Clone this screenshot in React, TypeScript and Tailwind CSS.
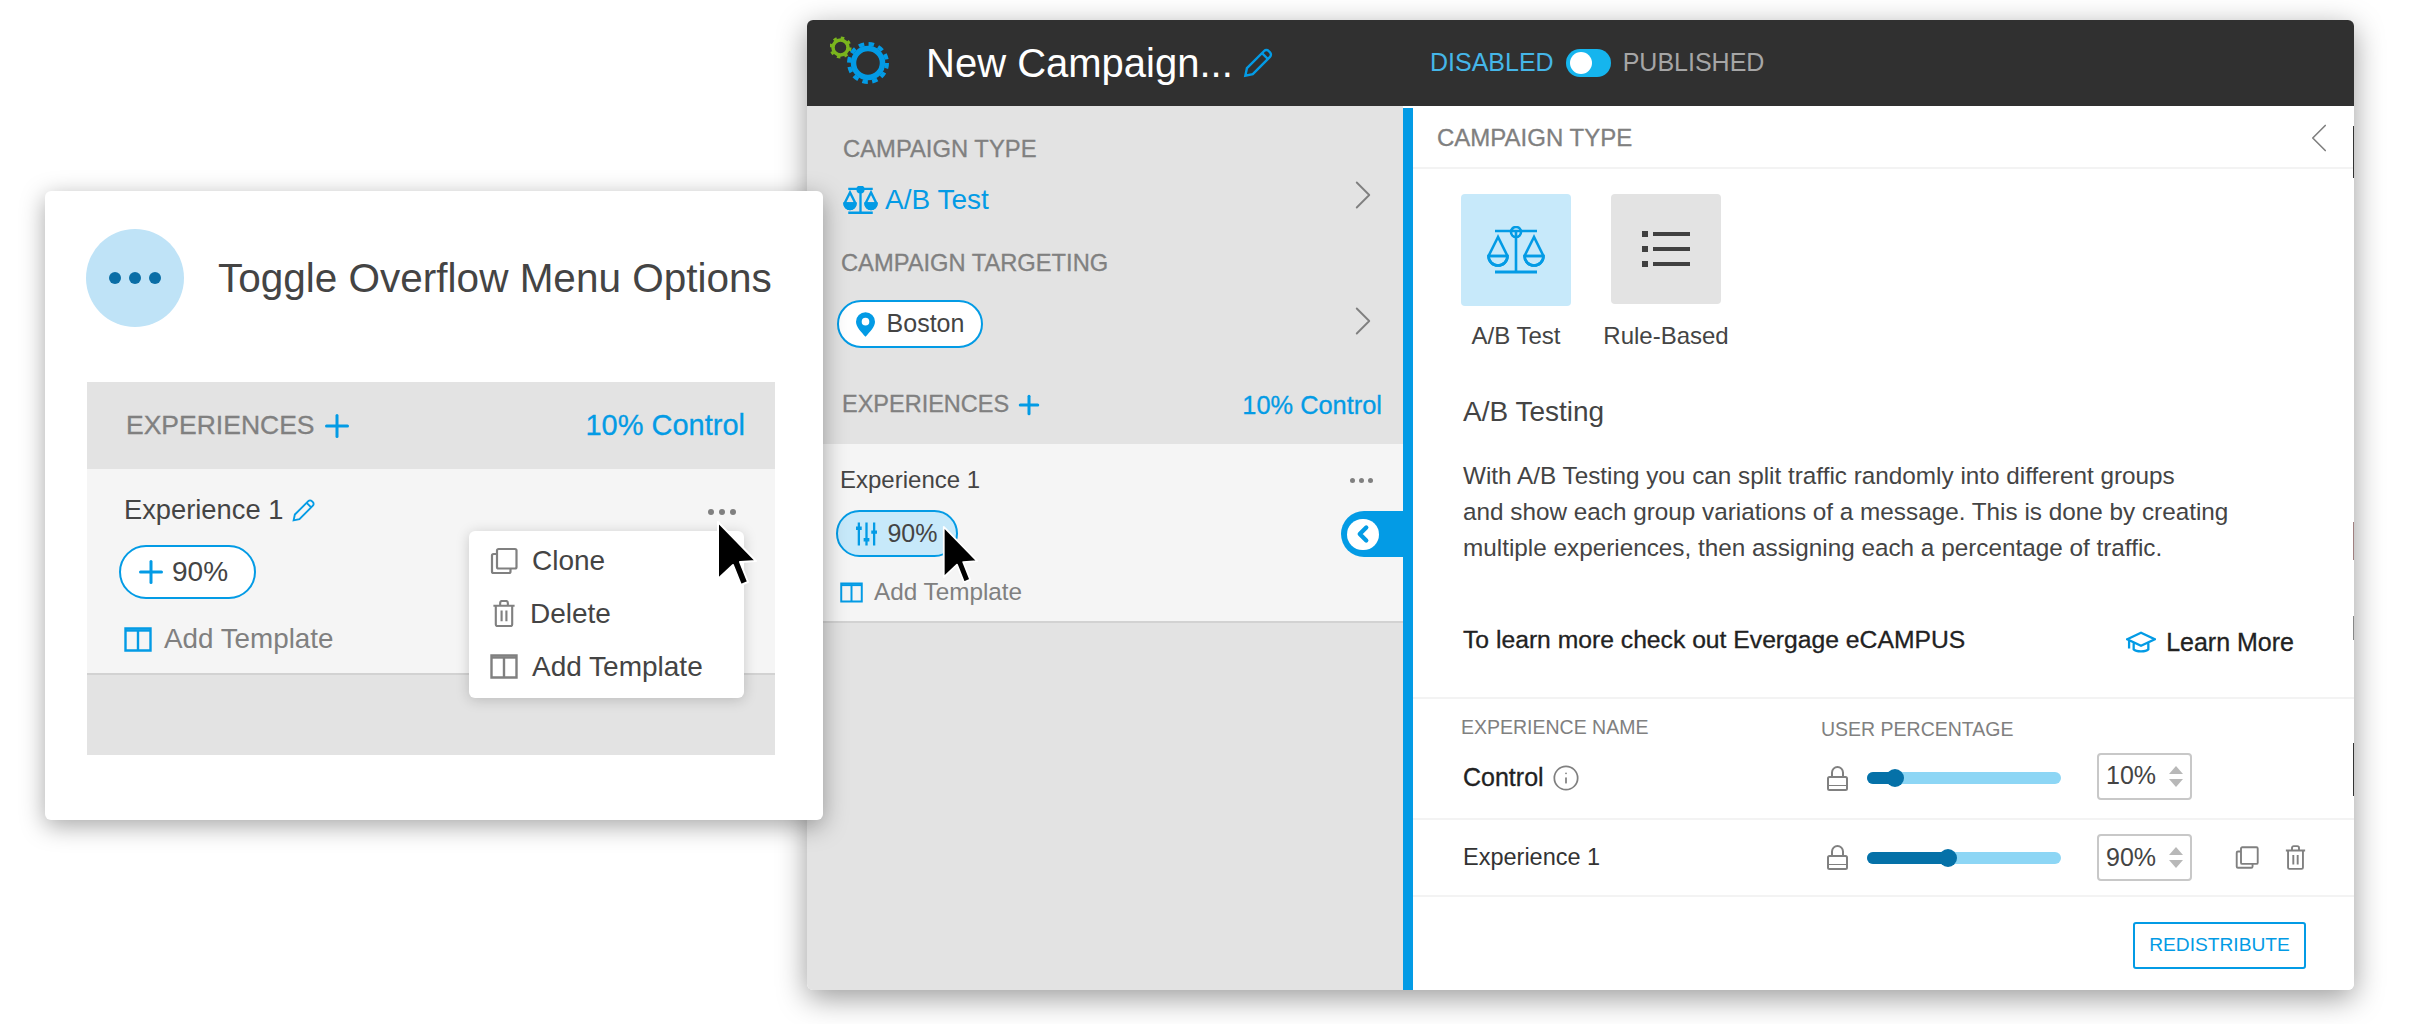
import { ChevronLeft, ChevronRight, Info, Plus } from "lucide-react";

const font = "font-['Liberation_Sans',Arial,sans-serif]";
const heavy = "[-webkit-text-stroke:0.3px_currentColor]";

function Pencil({ className }: { className?: string }) {
  return (
    <svg viewBox="0 0 24 24" fill="none" stroke="currentColor" strokeWidth="1.8" className={className}>
      <path d="M2.500 21.500l1.200-5.600L16.600 3a2.400 2.400 0 0 1 3.400 0l1 1a2.400 2.400 0 0 1 0 3.400L8.100 20.300z" />
      <path d="M15 4.600l4.400 4.400" />
    </svg>
  );
}

function Scales({ className, bold }: { className?: string; bold?: boolean }) {
  const pan = bold ? "currentColor" : "none";
  return (
    <svg viewBox="0 0 60 48" fill="none" stroke="currentColor" strokeWidth={bold ? 4 : 2.600} className={className}>
      <path d="M9 5h42M30 5v40" />
      <path d="M9 46h42" strokeWidth={bold ? 5 : 3} />
      <circle cx="30" cy="6" r="5" fill={pan} />
      <path d="M12 11L2.500 30a9.500 9.500 0 0 0 19 0zM2.500 30h19" />
      <path d="M2.500 30a9.500 9.500 0 0 0 19 0z" fill={pan} />
      <path d="M48 11l-9.500 19a9.500 9.500 0 0 0 19 0zM38.500 30h19" />
      <path d="M38.500 30a9.500 9.500 0 0 0 19 0z" fill={pan} />
    </svg>
  );
}

function Columns({ className }: { className?: string }) {
  return (
    <svg viewBox="0 0 28 25" fill="none" stroke="currentColor" strokeWidth="2.400" className={className}>
      <path d="M1.500 1.500h25v22h-25zM14 3v20" />
      <path d="M1.500 3.500h25" />
    </svg>
  );
}

function Copy({ className }: { className?: string }) {
  return (
    <svg viewBox="0 0 28 28" fill="none" stroke="currentColor" strokeWidth="2.200" className={className}>
      <rect x="7" y="2" width="19.500" height="19.500" rx="1.500" />
      <path d="M7 7H3.500A1.500 1.500 0 0 0 2 8.500V24.500A1.500 1.500 0 0 0 3.500 26H19a1.500 1.500 0 0 0 1.500-1.500V21.500" />
    </svg>
  );
}

function Trash({ className }: { className?: string }) {
  return (
    <svg viewBox="0 0 24 28" fill="none" stroke="currentColor" strokeWidth="2.200" className={className}>
      <path d="M1 6h22M3.500 6v19.500a1.500 1.500 0 0 0 1.500 1.500h14a1.500 1.500 0 0 0 1.500-1.500V6" />
      <path d="M8 6V3a2 2 0 0 1 2-2h4a2 2 0 0 1 2 2v3M9.500 11v11M14.500 11v11" />
    </svg>
  );
}

function Padlock({ className }: { className?: string }) {
  return (
    <svg viewBox="0 0 21 25" fill="none" stroke="currentColor" strokeWidth="2" className={className}>
      <rect x="1" y="11" width="19" height="13" rx="1.500" />
      <path d="M1 19.500h19" strokeWidth="1" />
      <path d="M5 11V6.500a5.500 5.500 0 0 1 11 0V11" />
    </svg>
  );
}

function Sliders({ className }: { className?: string }) {
  return (
    <svg viewBox="0 0 22 24" fill="none" stroke="currentColor" strokeWidth="2.400" className={className}>
      <path d="M3 0v24M11 0v24M19 0v24" />
      <path d="M0 6h6M8 18h6M16 10h6" strokeWidth="3.500" />
    </svg>
  );
}

function Cursor({ className }: { className?: string }) {
  return (
    <svg viewBox="0 0 42 68" className={className}>
      <path d="M2 2v57l15-14 8 20 7-3-8-20 16-1z" fill="#000" stroke="#fff" strokeWidth="2" strokeLinejoin="round" />
    </svg>
  );
}

function Gears() {
  return (
    <svg viewBox="0 0 60 48" className="h-[48px] w-[60px] -translate-y-[3px]" fill="none">
      <circle cx="10.500" cy="11.500" r="7.500" stroke="#7ab51d" strokeWidth="3.500" />
      <circle cx="10.500" cy="11.500" r="9.800" stroke="#7ab51d" strokeWidth="2.500" strokeDasharray="3.500 4.200" />
      <circle cx="38" cy="27" r="14.500" stroke="#039be5" strokeWidth="5.500" />
      <circle cx="38" cy="27" r="19" stroke="#039be5" strokeWidth="4" strokeDasharray="5.500 4.450" />
    </svg>
  );
}

function MenuRow({ icon, label, labelClass }: { icon: React.ReactNode; label: string; labelClass?: string }) {
  return (
    <div className="flex h-[53px] items-center gap-[14px] pl-[21px] text-[28px] text-[#444]">
      <span className="flex w-[28px] justify-center text-[#808080]">{icon}</span>
      <span className={labelClass}>{label}</span>
    </div>
  );
}

function OverflowCard() {
  return (
    <section className="absolute left-[45px] top-[191px] h-[629px] w-[778px] rounded-[6px] bg-white pl-[42px] pr-[48px] shadow-[0_6px_24px_rgba(0,0,0,0.35)]">
      <div className="flex h-[191px] items-center gap-[33px] pb-[17px]">
        <div className="flex h-[98px] w-[98px] -translate-x-[1px] items-center justify-center gap-[8px] rounded-full bg-[#bfe3f7]">
          <span className="h-[12px] w-[12px] rounded-full bg-[#0a6ea6]" />
          <span className="h-[12px] w-[12px] rounded-full bg-[#0a6ea6]" />
          <span className="h-[12px] w-[12px] rounded-full bg-[#0a6ea6]" />
        </div>
        <h1 className="whitespace-nowrap text-[40.500px] font-normal text-[#444]">Toggle Overflow Menu Options</h1>
      </div>

      <div className="h-[373px] bg-[#e3e3e3]">
        <div className="flex h-[87px] items-center justify-between pl-[39px] pr-[30px]">
          <div className={`flex items-center gap-[4px] text-[26.500px] text-[#808080] ${heavy}`}>
            EXPERIENCES
            <Plus className="h-[36px] w-[36px] text-[#039be5]" strokeWidth={2} />
          </div>
          <span className={`text-[29px] text-[#039be5] ${heavy}`}>10% Control</span>
        </div>
        <div className="relative h-[206px] border-b-2 border-[#d2d2d2] bg-[#f5f5f5] pl-[37px]">
          <div className="flex h-[72px] items-center gap-[8px] pt-[10px] text-[27.300px] text-[#444]">
            Experience 1
            <Pencil className="h-[25px] w-[25px] text-[#039be5]" />
          </div>
          <div className="mt-[4px] flex h-[54px] w-[137px] -translate-x-[5px] items-center gap-[3px] rounded-full border-2 border-[#039be5] bg-white pl-[12px] text-[28px] text-[#444]">
            <Plus className="h-[36px] w-[36px] text-[#039be5]" strokeWidth={2} />
            90%
          </div>
          <div className="mt-[24px] flex items-center gap-[12px] text-[27.800px] leading-[32px] text-[#808080]">
            <Columns className="h-[25px] w-[28px] text-[#039be5]" />
            Add Template
          </div>
          <span className="absolute right-[39px] top-[40px] flex items-center gap-[5px]">
            <span className="h-[6px] w-[6px] rounded-full bg-[#808080]" />
            <span className="h-[6px] w-[6px] rounded-full bg-[#808080]" />
            <span className="h-[6px] w-[6px] rounded-full bg-[#808080]" />
          </span>
          <div className="absolute left-[382px] top-[62px] h-[167px] w-[275px] rounded-[6px] bg-white pt-[3px] shadow-[0_2px_14px_rgba(0,0,0,0.18)]">
            <MenuRow icon={<Copy className="h-[28px] w-[28px]" />} label="Clone" />
            <MenuRow icon={<Trash className="h-[27px] w-[24px]" />} label="Delete" labelClass="-translate-x-[2px]" />
            <MenuRow icon={<Columns className="h-[25px] w-[28px]" />} label="Add Template" />
          </div>
          <Cursor className="absolute left-[629px] top-[51px] h-[68px] w-[42px]" />
        </div>
      </div>
    </section>
  );
}

function Sidebar() {
  return (
    <aside className="relative w-[596px] bg-[#e3e3e3]">
      <div className="h-[280px] pl-[36px] pr-[15px] pt-[29px]">
        <p className={`text-[23.800px] leading-[28px] text-[#808080] ${heavy}`}>CAMPAIGN TYPE</p>
        <div className="mt-[12px] flex h-[50px] items-center justify-between">
          <span className="flex items-center gap-[7px] text-[28px] leading-[30px] text-[#039be5]">
            <Scales bold className="h-[28px] w-[35px]" />
            A/B Test
          </span>
          <ChevronRight className="h-[50px] w-[50px] -translate-y-[5px] text-[#808080]" strokeWidth={0.900} />
        </div>
        <p className={`mt-[24px] -translate-x-[2px] text-[23.700px] leading-[28px] text-[#808080] ${heavy}`}>CAMPAIGN TARGETING</p>
        <div className="mt-[22px] flex h-[50px] items-center justify-between">
          <span className="flex h-[48px] w-[146px] -translate-x-[6px] items-center justify-center gap-[12px] rounded-full border-2 border-[#039be5] bg-white text-[25px] text-[#444]">
            <svg viewBox="0 0 20 26" className="h-[25px] w-[19px]" fill="#039be5">
              <path d="M10 0a10 10 0 0 1 10 10c0 6-6 11-10 16C6 21 0 16 0 10A10 10 0 0 1 10 0zm0 6a4 4 0 1 0 0 8 4 4 0 0 0 0-8z" />
            </svg>
            Boston
          </span>
          <ChevronRight className="h-[50px] w-[50px] -translate-y-[3px] text-[#808080]" strokeWidth={0.900} />
        </div>
      </div>
      <div className="flex h-[38px] items-center justify-between pl-[35px] pr-[21px]">
        <span className={`flex items-center gap-[5px] text-[23.500px] text-[#808080] ${heavy}`}>
          EXPERIENCES
          <Plus className="h-[30px] w-[30px] text-[#039be5]" strokeWidth={2.400} />
        </span>
        <span className={`text-[25.400px] text-[#039be5] ${heavy}`}>10% Control</span>
      </div>
      <div className="relative mt-[20px] h-[179px] border-b-2 border-[#d2d2d2] bg-[#f5f5f5] pl-[33px]">
        <p className="pt-[22px] text-[24px] leading-[28px] text-[#444]">Experience 1</p>
        <span className="mt-[16px] flex h-[47px] w-[122px] -translate-x-[4px] items-center justify-center gap-[10px] rounded-full border-2 border-[#039be5] bg-[#c7e9fa] text-[25px] text-[#444]">
          <Sliders className="h-[24px] w-[21px] text-[#039be5]" />
          90%
        </span>
        <div className="mt-[21px] flex items-center gap-[11px] text-[24.300px] leading-[28px] text-[#808080]">
          <Columns className="h-[21px] w-[23px] text-[#039be5]" />
          Add Template
        </div>
        <span className="absolute right-[30px] top-[34px] flex items-center gap-[4px]">
          <span className="h-[5px] w-[5px] rounded-full bg-[#808080]" />
          <span className="h-[5px] w-[5px] rounded-full bg-[#808080]" />
          <span className="h-[5px] w-[5px] rounded-full bg-[#808080]" />
        </span>
        <Cursor className="absolute left-[135px] top-[81px] h-[60px] w-[37px]" />
        <div className="absolute right-0 top-[67px] flex h-[46px] w-[62px] items-center rounded-l-full bg-[#039be5] pl-[6px]">
          <span className="flex h-[31px] w-[32px] items-center justify-center rounded-full bg-white">
            <ChevronLeft className="h-[26px] w-[26px] text-[#039be5]" strokeWidth={4} />
          </span>
        </div>
      </div>
    </aside>
  );
}

function ExperienceRow({
  name,
  value,
  pct,
  inputShift,
  actions,
}: {
  name: React.ReactNode;
  value: string;
  pct: number;
  inputShift?: string;
  actions?: boolean;
}) {
  return (
    <div className="flex h-full items-center">
      <div className="w-[414px] pl-[50px] text-[#333]">{name}</div>
      <Padlock className="h-[25px] w-[21px] text-[#808080]" />
      <div className="relative ml-[19px] h-[12px] w-[194px] rounded-full bg-[#8dd6f5]">
        <div className="h-full rounded-full bg-[#0571a8]" style={{ width: `${pct}%` }} />
        <span
          className="absolute top-[-3px] h-[18px] w-[18px] -translate-x-1/2 rounded-full bg-[#0571a8]"
          style={{ left: `${pct}%` }}
        />
      </div>
      <div className={`ml-[36px] flex h-[47px] w-[95px] items-center justify-between rounded-[4px] border-2 border-[#c8c8c8] pl-[7px] pr-[7px] text-[25px] text-[#444] ${inputShift ?? ""}`}>
        {value}
        <span className="flex flex-col gap-[5px]">
          <span className="h-0 w-0 border-x-[7px] border-b-[8px] border-x-transparent border-b-[#b8b8b8]" />
          <span className="h-0 w-0 border-x-[7px] border-t-[8px] border-x-transparent border-t-[#b8b8b8]" />
        </span>
      </div>
      {actions ? (
        <div className="ml-[43px] flex items-center gap-[26px] text-[#808080]">
          <Copy className="h-[25px] w-[24px]" />
          <Trash className="h-[25px] w-[21px]" />
        </div>
      ) : null}
    </div>
  );
}

function Detail() {
  return (
    <div className="relative flex-1 bg-white">
      <div className="flex h-[63px] items-center justify-between border-b-2 border-[#f3f3f3] pl-[24px] pr-[10px] pt-[3px] text-[#808080]">
        <span className={`text-[24px] ${heavy}`}>CAMPAIGN TYPE</span>
        <ChevronLeft className="h-[50px] w-[50px]" strokeWidth={0.800} />
      </div>
      <div className="flex gap-[40px] pl-[48px] pt-[25px]">
        <div className="flex w-[110px] flex-col items-center">
          <div className="flex h-[112px] w-[110px] items-center justify-center rounded-[4px] bg-[#c7e9fa] text-[#039be5]">
            <Scales className="h-[48px] w-[60px]" />
          </div>
          <span className="mt-[16px] text-[24px] leading-[28px] text-[#444]">A/B Test</span>
        </div>
        <div className="flex w-[110px] flex-col items-center">
          <div className="mb-[2px] flex h-[110px] w-[110px] items-center justify-center rounded-[4px] bg-[#e3e3e3]">
            <svg viewBox="0 0 48 36" className="h-[36px] w-[48px]" fill="#404040">
              <path d="M0 0h6v6H0zM11 1h37v4H11zM0 15h6v6H0zM11 16h37v4H11zM0 30h6v6H0zM11 31h37v4H11z" />
            </svg>
          </div>
          <span className="mt-[16px] whitespace-nowrap text-[24px] leading-[28px] text-[#444]">Rule-Based</span>
        </div>
      </div>
      <div className="pl-[50px] pr-[40px]">
        <h2 className="mt-[46px] text-[28px] font-normal leading-[32px] text-[#444]">A/B Testing</h2>
        <p className="mt-[30px] whitespace-nowrap text-[24.300px] leading-[36px] text-[#444]">
          With A/B Testing you can split traffic randomly into different groups
          <br />
          and show each group variations of a message. This is done by creating
          <br />
          multiple experiences, then assigning each a percentage of traffic.
        </p>
        <div className="mt-[60px] flex items-center justify-between pr-[20px] text-[#222]">
          <span className={`text-[24.700px] leading-[28px] ${heavy}`}>To learn more check out Evergage eCAMPUS</span>
          <span className={`flex translate-y-[2px] items-center gap-[10px] text-[25px] leading-[28px] ${heavy}`}>
            <svg viewBox="0 0 32 24" fill="none" stroke="#039be5" strokeWidth="2.500" className="h-[22px] w-[30px]">
              <path d="M1 9L16 2l15 7-15 7zM8 13v7c3 3 13 3 16 0v-7M3 10v9" />
            </svg>
            Learn More
          </span>
        </div>
      </div>
      <div className="mt-[43px] h-[121px] border-t-2 border-[#f3f3f3]">
        <div className="flex pl-[48px] pt-[16px] text-[19.500px] leading-[24px] text-[#808080]">
          <span className="w-[360px]">EXPERIENCE NAME</span>
          <span className="pt-[2px]">USER PERCENTAGE</span>
        </div>
        <div className="h-[74px]">
          <ExperienceRow
            value="10%"
            pct={14.500}
            inputShift="-translate-y-[2px]"
            name={
              <span className={`flex items-center gap-[8px] text-[25px] text-[#222] ${heavy}`}>
                Control
                <Info className="h-[28px] w-[28px] text-[#808080]" strokeWidth={1.500} />
              </span>
            }
          />
        </div>
      </div>
      <div className="h-[79px] border-y-2 border-[#f3f3f3]">
        <ExperienceRow actions value="90%" pct={41.700} name={<span className="text-[23.500px]">Experience 1</span>} />
      </div>
      <div className="flex justify-end pr-[48px] pt-[25px]">
        <span className="flex h-[47px] w-[173px] items-center justify-center rounded-[3px] border-2 border-[#039be5] text-[19.200px] text-[#039be5]">
          REDISTRIBUTE
        </span>
      </div>
      {/* stray slivers of whatever sat behind the window in the capture */}
      <span className="absolute right-0 top-[20px] h-[52px] w-[1px] bg-[#333]" />
      <span className="absolute right-0 top-[416px] h-[38px] w-[1px] bg-[#a08080]" />
      <span className="absolute right-0 top-[510px] h-[24px] w-[1px] bg-[#888]" />
      <span className="absolute right-0 top-[637px] h-[53px] w-[1px] bg-[#333]" />
    </div>
  );
}

function CampaignWindow() {
  return (
    <section className="absolute left-[807px] top-[20px] flex h-[970px] w-[1547px] flex-col overflow-hidden rounded-[6px] shadow-[0_8px_30px_rgba(0,0,0,0.4)]">
      <header className="flex h-[86px] shrink-0 items-center bg-[#303030] pl-[23px]">
        <Gears />
        <div className="ml-[36px] flex w-[504px] items-center gap-[9px]">
          <span className="text-[40px] text-white">New Campaign...</span>
          <Pencil className="h-[32px] w-[32px] text-[#039be5]" />
        </div>
        <div className="flex items-center gap-[12px] text-[25px]">
          <span className="text-[#45b6e8]">DISABLED</span>
          <span className="relative h-[28px] w-[45px] rounded-full bg-[#15b5ee]">
            <span className="absolute left-[4px] top-[3px] h-[22px] w-[22px] rounded-full bg-white" />
          </span>
          <span className="text-[#a6a6a6]">PUBLISHED</span>
        </div>
      </header>
      <div className="flex min-h-0 flex-1">
        <Sidebar />
        <div className="mt-[2px] w-[10px] bg-[#039be5]" />
        <Detail />
      </div>
    </section>
  );
}

export default function App() {
  return (
    <main className={`relative h-[1024px] w-[2412px] overflow-hidden bg-white ${font}`}>
      <CampaignWindow />
      <OverflowCard />
    </main>
  );
}
